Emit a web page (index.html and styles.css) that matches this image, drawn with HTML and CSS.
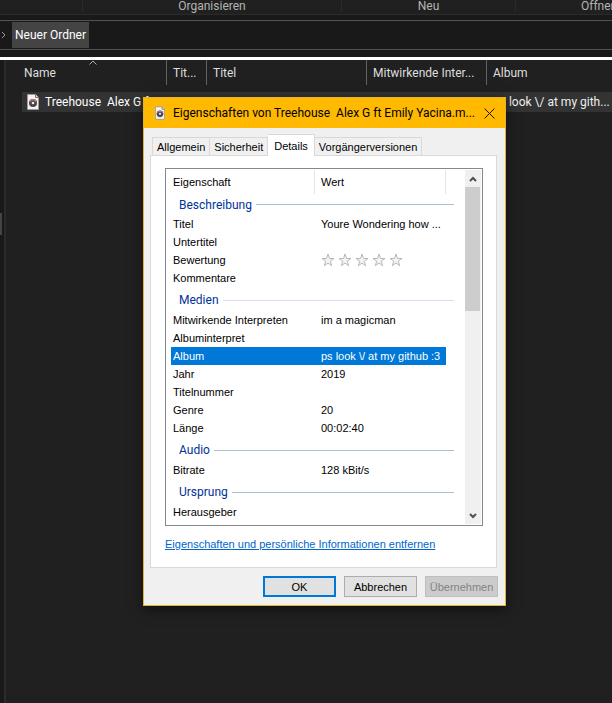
FILE: index.html
```html
<!DOCTYPE html>
<html lang="de">
<head>
<meta charset="utf-8">
<title>Neuer Ordner</title>
<link rel="stylesheet" href="styles.css">
</head>
<body>
<svg class="sprite" aria-hidden="true">
  <symbol id="audio-file" viewBox="0 0 12 16">
    <path d="M.5.5h8l3 3v12H.5z" fill="#f4f4f4" stroke="#999"/>
    <path d="M8.5.5v3h3" fill="#ddd" stroke="#777"/>
    <circle cx="6" cy="9" r="4" fill="#4b4350"/>
    <path d="M3 7.500a3.500 3.500 0 0 1 6 0" fill="none" stroke="#c97a55" stroke-width="1.500"/>
    <circle cx="6" cy="9" r="1.300" fill="#f0f0f0"/>
  </symbol>
  <symbol id="star" viewBox="0 0 14 14">
    <path d="M7 1l1.500 4.500H13L9.300 8.200l1.400 4.600L7 10l-3.700 2.800 1.400-4.600L1 5.500h4.500z" fill="#f4f4f4" stroke="#b9b9b9"/>
  </symbol>
</svg>

<main class="explorer">
  <div class="ribbon">
    <span class="ribbon-group"></span>
    <span class="ribbon-group">Organisieren</span>
    <span class="ribbon-group">Neu</span>
    <span class="ribbon-group open">Öffnen</span>
  </div>
  <nav class="address" aria-label="Pfad">
    <svg class="crumb-arrow" viewBox="0 0 6 8" aria-hidden="true"><path d="M1 1l3 3-3 3"/></svg>
    <a class="crumb" href="#">Neuer Ordner</a>
  </nav>
  <div class="content">
    <div class="tree"><div class="tree-thumb"></div></div>
    <div class="files">
      <table class="file-table">
        <colgroup><col class="c-name"><col class="c-short"><col class="c-title"><col class="c-artist"><col></colgroup>
        <thead>
          <tr>
            <th>Name<svg class="sort" viewBox="0 0 8 5" aria-hidden="true"><path d="M.5 4.500L4 1l3.500 3.500"/></svg></th>
            <th>Tit...</th><th>Titel</th><th>Mitwirkende Inter...</th><th>Album</th>
          </tr>
        </thead>
        <tbody>
          <tr>
            <td><div class="file-name"><svg class="file-icon" aria-hidden="true"><use href="#audio-file"/></svg>Treehouse&nbsp; Alex G ft</div></td>
            <td></td><td></td><td></td><td>ps look \/ at my gith...</td>
          </tr>
        </tbody>
      </table>
    </div>
  </div>
</main>

<section class="dialog" role="dialog" aria-labelledby="dialog-title">
  <header class="titlebar">
    <svg class="title-icon" aria-hidden="true"><use href="#audio-file"/></svg>
    <h1 id="dialog-title">Eigenschaften von Treehouse&nbsp; Alex G ft Emily Yacina.m...</h1>
    <button class="close" aria-label="Schließen"><svg viewBox="0 0 11 11" aria-hidden="true"><path d="M.5.5l10 10M10.500.5l-10 10"/></svg></button>
  </header>
  <div class="dialog-body">
    <div class="tabs" role="tablist">
      <button class="tab" role="tab">Allgemein</button>
      <button class="tab" role="tab">Sicherheit</button>
      <button class="tab active" role="tab" aria-selected="true">Details</button>
      <button class="tab" role="tab">Vorgängerversionen</button>
    </div>
    <div class="panel">
      <div class="listbox">
        <table class="props">
          <colgroup><col class="p-name"><col class="p-value"><col></colgroup>
          <thead><tr><th>Eigenschaft</th><th>Wert</th><th></th></tr></thead>
          <tbody>
            <tr class="group"><th colspan="3"><div class="rule">Beschreibung</div></th></tr>
            <tr><td>Titel</td><td>Youre Wondering how ...</td></tr>
            <tr><td>Untertitel</td><td></td></tr>
            <tr><td>Bewertung</td><td><div class="stars"><svg><use href="#star"/></svg><svg><use href="#star"/></svg><svg><use href="#star"/></svg><svg><use href="#star"/></svg><svg><use href="#star"/></svg></div></td></tr>
            <tr><td>Kommentare</td><td></td></tr>
            <tr class="group"><th colspan="3"><div class="rule pale">Medien</div></th></tr>
            <tr><td>Mitwirkende Interpreten</td><td>im a magicman</td></tr>
            <tr><td>Albuminterpret</td><td></td></tr>
            <tr class="selected"><td>Album</td><td>ps look \/ at my github :3</td></tr>
            <tr><td>Jahr</td><td>2019</td></tr>
            <tr><td>Titelnummer</td><td></td></tr>
            <tr><td>Genre</td><td>20</td></tr>
            <tr><td>Länge</td><td>00:02:40</td></tr>
            <tr class="group"><th colspan="3"><div class="rule">Audio</div></th></tr>
            <tr><td>Bitrate</td><td>128 kBit/s</td></tr>
            <tr class="group"><th colspan="3"><div class="rule">Ursprung</div></th></tr>
            <tr><td>Herausgeber</td><td></td></tr>
          </tbody>
        </table>
        <div class="scrollbar">
          <button aria-label="Nach oben"><svg viewBox="0 0 8 6" aria-hidden="true"><path d="M1 5l3-3 3 3"/></svg></button>
          <div class="track"><div class="thumb"></div></div>
          <button aria-label="Nach unten"><svg viewBox="0 0 8 6" aria-hidden="true"><path d="M1 1l3 3 3-3"/></svg></button>
        </div>
      </div>
      <a class="remove" href="#">Eigenschaften und persönliche Informationen entfernen</a>
    </div>
    <footer class="actions">
      <button class="action default">OK</button>
      <button class="action">Abbrechen</button>
      <button class="action" disabled>Übernehmen</button>
    </footer>
  </div>
</section>
</body>
</html>
```
FILE: styles.css
```css
* { box-sizing: border-box; }
body {
  margin: 0;
  min-height: 100vh;
  background: #202020;
  color: #dedede;
  font: 12px/16px Roboto, "Open Sans", sans-serif;
  overflow: hidden;
}
button { font: inherit; color: inherit; padding: 0; margin: 0; border: 0; }
table { border-collapse: separate; border-spacing: 0; table-layout: fixed; width: 100%; }
th, td { padding: 0; text-align: left; font-weight: normal; white-space: nowrap; }
.sprite { position: absolute; width: 0; height: 0; }

/* Explorer window */
.explorer { display: flex; flex-direction: column; min-height: 100vh; }
.ribbon {
  display: grid;
  grid-template-columns: 83px 259px 174px 1fr;
  height: 15px;
  background: #202020;
  border-bottom: 1px solid #2b2b2b;
  color: #b4b4b4;
  line-height: 12px;
  text-align: center;
}
.ribbon-group { border-right: 1px solid #2b2b2b; height: 12px; }
.ribbon-group.open { border: 0; padding-left: 65px; text-align: left; white-space: nowrap; }
.address {
  display: flex;
  align-items: center;
  height: 30px;
  margin: 5px 0 7px;
  border: solid #535353;
  border-width: 1px 0;
  background: #191919;
  box-shadow: 0 -5px #191919, 0 7px #191919;
}
.crumb-arrow { width: 6px; height: 8px; margin: 0 5px 0 1px; fill: none; stroke: #999; }
.crumb {
  padding: 0 3px;
  background: #444;
  color: #fff;
  line-height: 26px;
  text-decoration: none;
}
.content { display: flex; flex: 1; border-top: 3px solid #fff; }
.tree { width: 6px; padding-top: 153px; background: #191919; border-right: 2px solid #2b2b2b; }
.tree-thumb { width: 2px; height: 22px; background: #444; }
.files { flex: 1; min-width: 0; }
.c-name { width: 161px; }
.c-short { width: 40px; }
.c-title { width: 160px; }
.c-artist { width: 120px; }
.file-table th {
  position: relative;
  height: 25px;
  padding-left: 6px;
  border-right: 1px solid #636363;
}
.file-table th:first-child { padding-left: 18px; }
.file-table th:last-child { border: 0; }
.sort { position: absolute; top: 0; left: 83px; width: 8px; height: 5px; fill: none; stroke: #aaa; }
.file-table td { height: 20px; padding-left: 6px; background: #333; color: #eee; }
.file-table td:first-child { padding-left: 16px; background: none; }
.file-table tbody::before { content: ""; display: block; height: 7px; }
.file-name { display: flex; align-items: center; gap: 6px; height: 20px; padding-left: 5px; background: #333; color: #fff; }
.file-icon { flex: none; width: 12px; height: 16px; }

/* Properties dialog */
.dialog {
  position: absolute;
  top: 97px;
  left: 143px;
  right: 106px;
  border: 1px solid #e5b32c;
  background: #f0f0f0;
  box-shadow: 0 3px 12px #0008;
  color: #000;
  font: 11px/18px "Liberation Sans", Arial, sans-serif;
}
.titlebar {
  display: flex;
  align-items: center;
  height: 30px;
  padding: 0 10px 0 11px;
  background: #ffb900;
}
.title-icon { flex: none; width: 10px; height: 14px; }
.titlebar h1 {
  flex: 1;
  min-width: 0;
  margin: 0 0 0 8px;
  font: 12px/16px Roboto, "Open Sans", sans-serif;
  white-space: nowrap;
}
.close { display: flex; background: none; }
.close svg { width: 11px; height: 11px; fill: none; stroke: #1a1400; }
.dialog-body { padding: 6px 8px 8px 6px; }
.tabs { display: flex; align-items: flex-end; height: 21px; padding-left: 2px; }
.tab {
  height: 18px;
  padding: 0 4px;
  border: 1px solid #d9d9d9;
  border-width: 1px 1px 0 0;
  background: #f0f0f0;
  line-height: 18px;
}
.tab:first-child { border-left-width: 1px; }
.tab.active { height: 22px; margin: 0 0 -1px; padding: 0 6px; background: #fff; position: relative; }
.panel {
  padding: 12px 13px 14px 14px;
  border: 1px solid #d9d9d9;
  background: #fff;
}
.listbox { display: flex; border: 1px solid #828790; padding: 1px; }
.props { flex: 1; width: 0; margin: 0 0 3px 4px; }
.p-name { width: 144px; }
.p-value { width: 131px; }
.props td, .props th { height: 18px; line-height: 18px; padding: 0 0 0 2px; }
.props td + td, .props th + th { padding-left: 6px; }
.props thead th { height: 24px; border-right: 1px solid #e5e5e5; }
.props thead th:last-child { border: 0; }
.props .group th { height: 24px; padding: 2px 11px 0 8px; font: 12px/18px Roboto, "Open Sans", sans-serif; color: #003399; }
.props .group:first-child th { height: 21px; padding-top: 0; }
.rule { display: flex; align-items: center; gap: 4px; height: 18px; }
.rule::after { content: ""; flex: 1; height: 1px; background: #b0bdda; }
.rule.pale::after { background: #d7def0; }
.selected td { background: #0078d7; color: #fff; }
.stars { display: flex; gap: 3px; }
.stars svg { width: 14px; height: 14px; }
.scrollbar { display: flex; flex-direction: column; width: 16px; background: #f0f0f0; }
.scrollbar button { display: grid; place-items: center; height: 17px; background: none; }
.scrollbar svg { width: 8px; height: 6px; fill: none; stroke: #505050; stroke-width: 2; }
.track { flex: 1; }
.thumb { height: 124px; width: 15px; background: #cdcdcd; }
.remove { display: block; margin-top: 9px; line-height: 18px; color: #0066cc; white-space: nowrap; }
.actions { display: flex; justify-content: flex-end; gap: 8px; margin: 8px -1px 0 0; }
.action { width: 73px; height: 21px; border: 1px solid #adadad; background: #e1e1e1; }
.action.default { border: 2px solid #0078d7; }
.action:disabled { border-color: #bfbfbf; background: #ccc; color: #838383; }
```
